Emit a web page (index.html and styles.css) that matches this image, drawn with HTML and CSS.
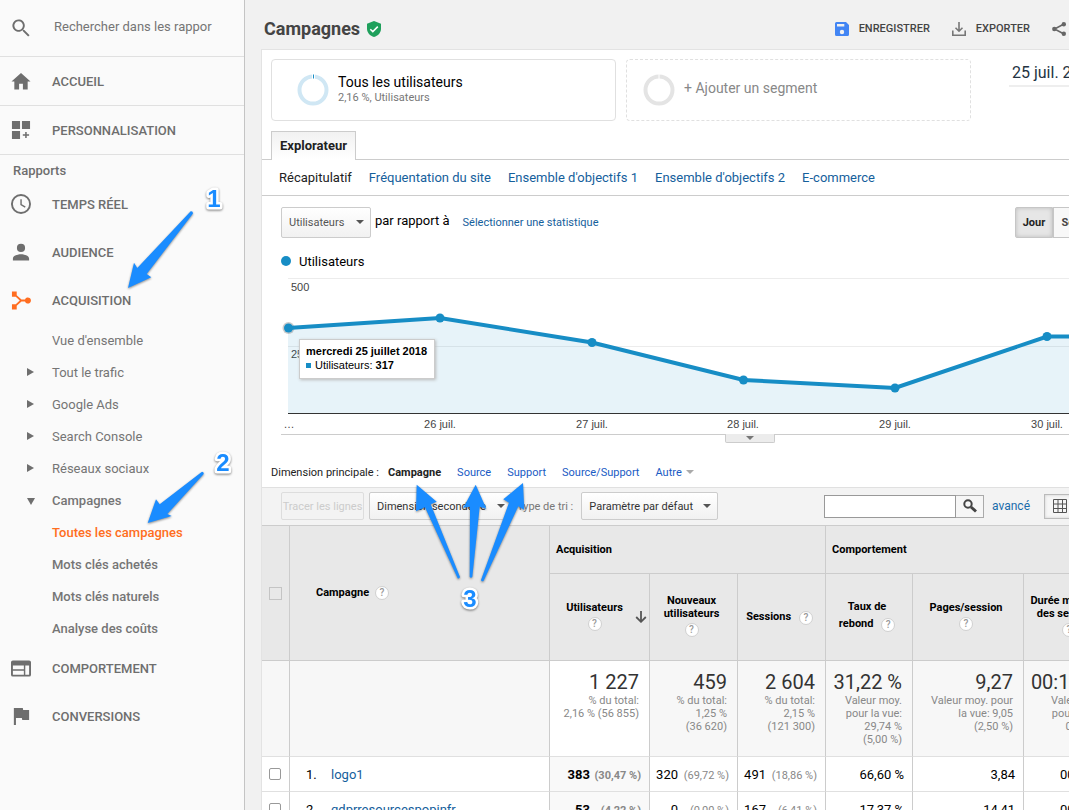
FILE: index.html
```html
<!DOCTYPE html>
<html lang="fr">
<head>
<meta charset="utf-8">
<title>Campagnes</title>
<link rel="stylesheet" href="styles.css">
</head>
<body>
<div class="app">
  <aside class="sidebar">
    <label class="side-search">
      <svg class="icon" viewBox="1.500 1.500 21 21"><path d="M15.500 14h-.8l-.3-.3A6.500 6.500 0 1 0 13.700 14.400l.3.3v.8l5.500 5.500 1.500-1.500zm-6 0a4.500 4.500 0 1 1 0-9 4.500 4.500 0 0 1 0 9z"/></svg>
      <input type="text" placeholder="Rechercher dans les rappor" aria-label="Rechercher dans les rapports">
    </label>
    <nav>
      <a class="side-item ruled" href="#"><svg class="icon" viewBox="1.500 1.500 21 21"><path d="M10 21v-6h4v6h5v-8.500H22L12 3.500 2 12.500h3V21z"/></svg>ACCUEIL</a>
      <a class="side-item ruled" href="#"><svg class="icon" viewBox="1.500 1.500 21 21"><path d="M2.500 2.500h8.500V11H2.500zM13 2.500h8.500V11H13zM2.500 13H11v8.500H2.500zM16.400 14h1.600v2.500h2.500V18H18v2.500h-1.600V18h-2.500v-1.500h2.500z"/></svg>PERSONNALISATION</a>
      <h2 class="side-title">Rapports</h2>
      <a class="side-item" href="#"><svg class="icon" viewBox="1.500 1.500 21 21"><path d="M12 1.500a10.500 10.500 0 1 0 0 21 10.500 10.500 0 0 0 0-21zm0 2a8.500 8.500 0 1 1 0 17 8.500 8.500 0 0 1 0-17zM11.300 7v6l4.800 3 .8-1.300-4.100-2.500V7z"/></svg>TEMPS RÉEL</a>
      <a class="side-item" href="#"><svg class="icon" viewBox="1.500 1.500 21 21"><path d="M12 12a4.300 4.300 0 1 0 0-8.600A4.300 4.300 0 0 0 12 12zM3.500 21v-2.300c0-3 5.700-4.400 8.500-4.400s8.500 1.400 8.500 4.400V21z"/></svg>AUDIENCE</a>
      <a class="side-item" href="#"><svg class="icon accent" viewBox="1.500 1.500 21 21"><path d="M2.500 3h5v4L12.500 11.500h3.700a3.200 3.200 0 1 1 0 2h-3.700l-5 4.500v4h-5v-5.500h4l4.200-4-4.200-4h-4z"/></svg>ACQUISITION</a>
      <a class="sub-item" href="#"><span class="caret"></span>Vue d'ensemble</a>
      <a class="sub-item" href="#"><span class="caret right"></span>Tout le trafic</a>
      <a class="sub-item" href="#"><span class="caret right"></span>Google Ads</a>
      <a class="sub-item" href="#"><span class="caret right"></span>Search Console</a>
      <a class="sub-item" href="#"><span class="caret right"></span>Réseaux sociaux</a>
      <a class="sub-item strong" href="#"><span class="caret down"></span>Campagnes</a>
      <a class="sub-item strong current" href="#"><span class="caret"></span>Toutes les campagnes</a>
      <a class="sub-item strong" href="#"><span class="caret"></span>Mots clés achetés</a>
      <a class="sub-item strong" href="#"><span class="caret"></span>Mots clés naturels</a>
      <a class="sub-item strong" href="#"><span class="caret"></span>Analyse des coûts</a>
      <a class="side-item" href="#"><svg class="icon" viewBox="1.500 1.500 21 21"><path fill-rule="evenodd" d="M3.500 4h17a2 2 0 0 1 2 2v13a2 2 0 0 1-2 2h-17a2 2 0 0 1-2-2V6a2 2 0 0 1 2-2zM3.500 9.500v3.800h11.500V9.500zM3.500 14.800V19h11.500v-4.200zM16.500 9.500V19h4V9.500z"/></svg>COMPORTEMENT</a>
      <a class="side-item" href="#"><svg class="icon" viewBox="1.500 1.500 21 21"><path d="M14.300 5.700l-.4-2.200H4.500v18h2.200v-7.500h6.200l.4 2.200h7.200V5.700z"/></svg>CONVERSIONS</a>
    </nav>
  </aside>

  <main class="main">
    <header class="page-head">
      <h1>Campagnes</h1>
      <svg class="shield" viewBox="0 0 14 16"><path fill="#1fa05c" d="M7 0l7 2.700v5C14 11.500 11 15 7 16 3 15 0 11.500 0 7.700v-5z"/><path fill="none" stroke="#fff" stroke-width="1.500" d="M3.300 8.200l2.500 2.400 5-5"/></svg>
      <div class="actions">
        <button type="button" class="action save"><svg viewBox="0 0 14 14"><path fill="#4285f4" fill-rule="evenodd" d="M1.500 0H11l3 3v9.500a1.500 1.500 0 0 1-1.500 1.500h-11A1.500 1.500 0 0 1 0 12.500v-11A1.500 1.500 0 0 1 1.500 0zM2 2v2.600h7.300V2zM7 7.800a2.200 2.200 0 1 0 0 4.400 2.200 2.200 0 0 0 0-4.400z"/></svg>ENREGISTRER</button>
        <button type="button" class="action"><svg viewBox="0 0 14 14"><path fill="none" stroke="#777" stroke-width="1.600" d="M7 0v9M3.500 5.700L7 9.200l3.500-3.500M.8 8.500v4.700h12.400V8.500"/></svg>EXPORTER</button>
        <button type="button" class="action share" aria-label="Partager"><svg viewBox="0 0 14 14"><path fill="none" stroke="#666" stroke-width="1.500" d="M12 2L2.500 7 12 12"/><g fill="#666"><circle cx="11.800" cy="2.200" r="2.200"/><circle cx="2.300" cy="7" r="2.200"/><circle cx="11.800" cy="11.800" r="2.200"/></g></svg></button>
      </div>
    </header>

    <section class="panel">
      <div class="segments">
        <div class="segment">
          <svg class="ring" viewBox="0 0 32 32"><circle cx="16" cy="16" r="13.500" fill="none" stroke="#d0e7f4" stroke-width="4"/><path stroke="#fff" stroke-width="3" d="M16.500 0v5"/><path stroke="#178dc5" stroke-width="1" d="M16.500 .5v4"/></svg>
          <div><div class="segment-name">Tous les utilisateurs</div><div class="segment-info">2,16 %, Utilisateurs</div></div>
        </div>
        <div class="segment empty">
          <svg class="ring" viewBox="0 0 32 32"><circle cx="16" cy="16" r="13.500" fill="none" stroke="#e4e4e4" stroke-width="4"/><path stroke="#fff" stroke-width="1" d="M16 0v5"/></svg>
          <button type="button" class="add-segment">+ Ajouter un segment</button>
        </div>
        <button type="button" class="date">25 juil. 2018</button>
      </div>

      <div class="tabs"><a class="tab" href="#">Explorateur</a></div>
      <nav class="subnav">
        <a class="on" href="#">Récapitulatif</a><a href="#">Fréquentation du site</a><a href="#">Ensemble d'objectifs 1</a><a href="#">Ensemble d'objectifs 2</a><a href="#">E-commerce</a>
      </nav>

      <div class="metric-bar">
        <span class="drop"><select class="metric" aria-label="Statistique"><option>Utilisateurs</option></select></span>
        <span class="versus">par rapport à</span>
        <a class="pick" href="#">Sélectionner une statistique</a>
        <div class="period"><button type="button" class="on">Jour</button><button type="button">Semaine</button></div>
      </div>

      <div class="legend"><span class="dot"></span>Utilisateurs</div>
      <div class="chart">
        <svg class="plot" role="img" aria-label="Utilisateurs par jour">
          <path stroke="#ececec" d="M7 7.500H1200M7 75.500H1200"/>
          <text x="10" y="20">500</text>
          <text x="10" y="87">250</text>
          <path fill="#178dc5" fill-opacity=".1" d="M7 57L159 47L311 71.500L462.500 109L614 117L766 65.500L918 65V142H7z"/>
          <path stroke="#333" d="M7 142.500H1200"/>
          <circle cx="7.500" cy="57" r="6" fill="#555" fill-opacity=".3"/>
          <path fill="none" stroke="#178dc5" stroke-width="4" d="M7 57L159 47L311 71.500L462.500 109L614 117L766 65.500L918 65"/>
          <g fill="#178dc5"><circle cx="7.500" cy="57" r="4.500"/><circle cx="159" cy="47" r="4.500"/><circle cx="311" cy="71.500" r="4.500"/><circle cx="462.500" cy="109" r="4.500"/><circle cx="614" cy="117" r="4.500"/><circle cx="766" cy="65.500" r="4.500"/></g>
          <g text-anchor="middle"><text x="8" y="157">…</text><text x="159" y="157">26 juil.</text><text x="311" y="157">27 juil.</text><text x="462" y="157">28 juil.</text><text x="614" y="157">29 juil.</text><text x="766" y="157">30 juil.</text></g>
        </svg>
        <div class="tip"><b>mercredi 25 juillet 2018</b><div><i></i>Utilisateurs: <b>317</b></div></div>
        <button type="button" class="handle" aria-label="Afficher les annotations"></button>
      </div>

      <div class="dimensions">
        <span>Dimension principale :</span><b class="chosen">Campagne</b><a href="#">Source</a><a href="#">Support</a><a href="#">Source/Support</a><a class="more" href="#">Autre</a>
      </div>

      <div class="toolbar">
        <button type="button" class="rows" disabled>Tracer les lignes</button>
        <span class="drop"><select class="second" aria-label="Dimension secondaire"><option>Dimension secondaire</option></select></span>
        <label class="sort">Type de tri : <span class="drop"><select class="sorting"><option>Paramètre par défaut</option></select></span></label>
        <div class="find">
          <input type="text" aria-label="Rechercher"><button type="button" aria-label="Lancer la recherche"><svg viewBox="0 0 14 14"><circle cx="5" cy="5" r="3.700" fill="none" stroke="#444" stroke-width="2"/><path stroke="#444" stroke-width="3" d="M8 8l5 4.500"/></svg></button>
          <a href="#">avancé</a>
          <button type="button" class="view" aria-label="Tableau"><svg viewBox="0 0 14 14"><path fill="none" stroke="#555" d="M.5 .5h13v13H.5zM5 .5v13M9.500 .5v13M.5 5h13M.5 9.500h13"/></svg></button>
        </div>
      </div>

      <table class="data">
        <colgroup><col class="c-check"><col class="c-name"><col class="c-users"><col class="c-new"><col class="c-sess"><col class="c-bounce"><col class="c-pages"><col class="c-time"></colgroup>
        <thead>
          <tr class="groups">
            <th rowspan="2" class="check"><input type="checkbox" disabled aria-label="Tout sélectionner"></th>
            <th rowspan="2" class="name">Campagne <span class="help">?</span></th>
            <th colspan="3" class="group">Acquisition</th>
            <th colspan="3" class="group">Comportement</th>
          </tr>
          <tr class="heads">
            <th><div class="sorted"><span>Utilisateurs<br><span class="help">?</span></span><svg viewBox="0 0 12 12"><path fill="none" stroke="#555" stroke-width="1.800" d="M6 0v10.500M1.200 6L6 10.800 10.800 6"/></svg></div></th>
            <th>Nouveaux<br>utilisateurs<br><span class="help">?</span></th>
            <th>Sessions <span class="help side">?</span></th>
            <th>Taux de<br>rebond <span class="help side">?</span></th>
            <th>Pages/session<br><span class="help">?</span></th>
            <th>Durée moyenne<br>des sessions<br><span class="help">?</span></th>
          </tr>
        </thead>
        <tbody>
          <tr class="totals">
            <td></td><td></td>
            <td class="users"><strong>1 227</strong>% du total:<br>2,16 % (56 855)</td>
            <td><strong>459</strong>% du total:<br>1,25 %<br>(36 620)</td>
            <td><strong>2 604</strong>% du total:<br>2,15 %<br>(121 300)</td>
            <td><strong>31,22 %</strong>Valeur moy.<br>pour la vue:<br>29,74 %<br>(5,00 %)</td>
            <td><strong>9,27</strong>Valeur moy. pour<br>la vue: 9,05<br>(2,50 %)</td>
            <td><strong>00:10:54</strong>Valeur moy.<br>pour la vue:<br>00:10:12<br>(7,00 %)</td>
          </tr>
          <tr class="line">
            <td class="check"><input type="checkbox" aria-label="logo1"></td>
            <td class="name"><span class="rank">1.</span><a href="#">logo1</a></td>
            <td class="users"><div class="pair">383<small>(30,47 %)</small></div></td>
            <td><div class="pair">320<small>(69,72 %)</small></div></td>
            <td><div class="pair">491<small>(18,86 %)</small></div></td>
            <td>66,60 %</td><td>3,84</td><td>00:03:12</td>
          </tr>
          <tr class="line">
            <td class="check"><input type="checkbox" aria-label="gdprresourcespopinfr"></td>
            <td class="name"><span class="rank">2.</span><a href="#">gdprresourcespopinfr</a></td>
            <td class="users"><div class="pair">53<small>(4,22 %)</small></div></td>
            <td><div class="pair">0<small>(0,00 %)</small></div></td>
            <td><div class="pair">167<small>(6,41 %)</small></div></td>
            <td>17,37 %</td><td>14,41</td><td>00:14:08</td>
          </tr>
        </tbody>
      </table>
    </section>
  </main>

  <svg class="notes" aria-hidden="true">
    <g class="arrows">
      <path d="M128 288L134 262.700 137.300 268 190.700 211.300Q193 211 193 213.500L146.700 274 151.300 277.300z"/>
      <path d="M147.700 523L156 499.300 159.700 504.300 202 471.700Q204 472 203.700 474L167.300 514 171.700 516z"/>
      <path d="M416.700 484.700L416 511.300 425 507.300 457.700 578.300Q459.500 579 460 577L430.700 504.300 436.700 501.700z"/>
      <path d="M475.700 484.700L463.300 507.700 470 506.700 469.700 577Q471 578.500 472.300 577L479.700 506.700 486.300 508.700z"/>
      <path d="M523 483L503.300 499.300 509 502.700 481 580Q481.500 582 483.500 581L518.300 506.300 524.300 510z"/>
    </g>
    <g class="digits"><text x="214" y="207">1</text><text x="223" y="471">2</text><text x="470" y="607">3</text></g>
  </svg>
</div>
</body>
</html>
```
FILE: styles.css
```css
* { box-sizing: border-box; }
body {
  margin: 0;
  height: 100vh;
  overflow: hidden;
  font-family: Roboto, "Liberation Sans", sans-serif;
  font-size: 13px;
  color: #222;
  background: #f1f1f1;
}
a { color: #15609c; text-decoration: none; }
button, select, input { font-family: inherit; font-size: inherit; color: inherit; margin: 0; }
button { background: none; border: 0; padding: 0; }
svg { display: block; }

.app { position: relative; display: flex; height: 100%; overflow: hidden; }

/* Sidebar */
.sidebar { flex: none; width: 245px; background: #fafafa; border-right: 1px solid #c4c4c4; color: #757575; }
.icon { flex: none; width: 20px; height: 20px; margin: 0 21px 0 11px; fill: #6e6e6e; }
.icon.accent { fill: #ff6d20; }
.side-search { display: flex; align-items: center; height: 57px; border-bottom: 1px solid #e0e0e0; }
.side-search input { flex: 1; min-width: 0; border: 0; background: none; padding: 0 0 3px 2px; color: #757575; outline: 0; }
.side-search input::placeholder { color: #757575; }
.side-item { display: flex; align-items: center; height: 48px; color: #6e6e6e; font-weight: 500; font-size: 13px; }
.side-item.ruled { height: 49px; border-bottom: 1px solid #e0e0e0; }
.side-title { margin: 0; padding: 8px 0 0 13px; height: 25px; font-size: 13px; line-height: 16px; font-weight: 500; color: #6e6e6e; }
.sub-item { display: flex; align-items: center; height: 32px; color: #757575; }
.sub-item.strong { font-weight: 500; }
.sub-item.current { color: #ff6d20; }
.caret { width: 52px; height: 8px; flex: none; }
.caret::before { content: ""; display: block; margin-left: 27px; }
.caret.right::before { border-left: 7px solid #6e6e6e; border-top: 4px solid transparent; border-bottom: 4px solid transparent; width: 0; }
.caret.down::before { border-top: 7px solid #6e6e6e; border-left: 4px solid transparent; border-right: 4px solid transparent; width: 0; margin-top: 2px; }
.caret.down { display: flow-root; }

/* Header */
.main { flex: 1; min-width: 0; padding-left: 16px; overflow: hidden; }
.page-head { display: flex; align-items: center; height: 49px; padding: 9px 0 0 3px; }
h1 { margin: 0 7px 0 0; font-size: 18px; line-height: 24px; font-weight: 700; color: #444; }
.shield { width: 14px; height: 16px; }
.actions { display: flex; margin-left: auto; gap: 22px; margin-right: 3px; }
.action { display: flex; align-items: center; gap: 10px; font-size: 11px; line-height: 16px; font-weight: 500; color: #444; }
.action svg { width: 14px; height: 14px; }

/* Report panel */
.panel { background: #fff; border: solid #e3e3e3; border-width: 1px 0 0 1px; overflow: hidden; min-height: 761px; }
.segments { display: flex; gap: 10px; padding: 9px 0 10px 9px; }
.segment { flex: none; display: flex; align-items: center; gap: 9px; width: 345px; height: 62px; border: 1px solid #e0e0e0; border-radius: 4px; padding-left: 25px; }
.segment.empty { border-style: dashed; padding-left: 16px; }
.ring { width: 32px; height: 32px; }
.segment-name { font-size: 14px; line-height: 16px; color: #000; }
.segment-info { font-size: 11px; line-height: 16px; color: #777; }
.add-segment { font-size: 14px; color: #888; padding-bottom: 5px; }
.date { flex: none; align-self: flex-start; margin-left: 28px; padding: 0 3px; height: 28px; border-bottom: 2px solid #eee; font-size: 16px; color: #243342; }
.tabs { display: flex; height: 29px; padding-left: 9px; border-bottom: 1px solid #ccc; }
.tab { height: 29px; padding: 0 8px; border: 1px solid #ccc; border-bottom: 0; background: linear-gradient(#f1f1f1, #fff); font-weight: 700; line-height: 28px; color: #222; }
.subnav { display: flex; gap: 17px; height: 36px; padding-left: 17px; border-bottom: 1px solid #ccc; line-height: 35px; white-space: nowrap; }
.subnav .on { color: #222; }

.drop { position: relative; flex: none; display: inline-flex; }
.drop::after { content: ""; position: absolute; right: 7px; top: 50%; margin-top: -2px; border: 4px solid transparent; border-top-color: #555; border-bottom: 0; pointer-events: none; }
select { appearance: none; border: 1px solid #ccc; border-radius: 2px; background: linear-gradient(#fff, #f1f1f1); color: #444; padding: 0 20px 0 7px; outline: 0; }
.metric-bar { display: flex; align-items: center; height: 52px; padding-left: 19px; white-space: nowrap; }
.metric { width: 90px; height: 31px; font-size: 11px; color: #555; }
.versus { margin-left: 4px; padding-bottom: 3px; color: #000; }
.pick { margin-left: 13px; font-size: 11px; }
.period { display: flex; flex: none; margin: 0 -44px 0 auto; }
.period button { height: 31px; width: 60px; border: 1px solid #c6c6c6; background: #f8f8f8; font-size: 11px; font-weight: 700; color: #444; }
.period .on { width: 38px; background: #e6e6e6; box-shadow: inset 0 0 4px #bbb; color: #222; border-radius: 2px 0 0 2px; }

/* Chart */
.legend { display: flex; align-items: center; gap: 8px; height: 26px; padding-left: 19px; color: #000; }
.dot { width: 10px; height: 10px; border-radius: 50%; background: #178dc5; }
.chart { position: relative; height: 164px; margin: -3px 0 0 19px; border-bottom: 1px solid #ccc; }
.plot { width: 100%; height: 163px; font-family: "Liberation Sans", sans-serif; font-size: 11px; fill: #444; overflow: visible; }
.tip { position: absolute; left: 18px; top: 68px; padding: 4px 7px 6px 6px; border: 1px solid #ccc; background: #fff; box-shadow: 1px 1px 3px #bbb; font: 11px/14px "Liberation Sans", sans-serif; color: #000; white-space: nowrap; }
.tip i { display: inline-block; width: 5px; height: 5px; margin: 0 4px 1px 0; background: #178dc5; }
.handle { position: absolute; left: 444px; top: 163px; width: 50px; height: 9px; border: 1px solid #ccc; border-top: 0; border-radius: 0 0 2px 2px; background: #ececec; }
.handle::after { content: ""; display: block; width: 0; margin: 0 auto; border: 4px solid transparent; border-top-color: #777; border-bottom: 0; }

/* Table tools */
.dimensions { display: flex; gap: 16px; height: 52px; padding: 23px 0 0 9px; font-size: 11px; line-height: 30px; color: #222; white-space: nowrap; }
.dimensions a { color: #1a5bc4; }
.dimensions .chosen { margin-left: -7px; }
.more::after { content: ""; display: inline-block; margin: 0 0 2px 4px; border: 4px solid transparent; border-top-color: #aaa; border-bottom: 0; }
.toolbar { display: flex; align-items: center; height: 38px; padding: 0 0 1px 19px; border-top: 1px solid #e0e0e0; background: #f3f3f3; font-size: 11px; white-space: nowrap; }
.toolbar .rows { flex: none; width: 83px; height: 28px; margin-right: 5px; border: 1px solid #ddd; border-radius: 2px; color: #ccc; font-size: 11px; }
.toolbar select { height: 28px; font-size: 11px; color: #333; }
.second { width: 143px; }
.sorting { width: 137px; }
.sort { display: flex; align-items: center; gap: 8px; margin-left: 5px; color: #777; }
.find { display: flex; align-items: center; margin: 0 -7px 0 auto; }
.find input { width: 132px; height: 23px; border: 1px solid #999; outline: 0; background: #fff; }
.find button { display: flex; align-items: center; justify-content: center; width: 28px; height: 23px; border: 1px solid #aaa; border-left: 0; background: #f6f6f6; }
.find svg { width: 14px; height: 14px; }
.find a { margin: 0 14px 0 8px; font-size: 12px; color: #1a6cab; }
.find .view { width: 32px; height: 25px; border: 1px solid #bbb; box-shadow: inset 0 0 3px #ccc; }

/* Data table */
.data { table-layout: fixed; width: 857px; border-collapse: separate; border-spacing: 0; border-top: 1px solid #ccc; }
.c-check { width: 28px; }
.c-name { width: 260px; }
.c-users { width: 100px; }
.c-new, .c-sess { width: 88px; }
.c-bounce { width: 87px; }
.c-pages { width: 111px; }
.c-time { width: 95px; }
.data th, .data td { border-right: 1px solid #ccc; border-bottom: 1px solid #ccc; padding: 0; }
.data th { background: #e8e8e8; font-size: 11px; line-height: 13px; font-weight: 700; color: #000; }
.groups { height: 48px; }
.heads { height: 87px; }
.heads th { padding-right: 4px; }
.data .group { text-align: left; padding-left: 6px; }
.data th.name { text-align: left; padding-left: 26px; }
.help { display: inline-block; width: 14px; height: 14px; margin: 3px 0; border: 1px solid #d0d0d0; border-radius: 50%; background: #fff; color: #999; font-size: 10px; line-height: 12px; font-weight: 500; text-align: center; vertical-align: middle; }
.name .help { margin-left: 3px; }
.help.side { margin: 5px 0 3px 5px; }
.sorted { display: flex; align-items: center; padding-left: 4px; }
.sorted > span { flex: 1; }
.sorted svg { width: 12px; height: 12px; margin-right: -2px; }
.data input { appearance: none; display: block; width: 12px; height: 12px; margin: 0 0 0 7px; border: 1px solid #999; border-radius: 2px; background: #fff; }
.data th input { border-color: #c4c4c4; border-radius: 0; background: none; width: 13px; height: 13px; }
.totals td { height: 96px; padding: 10px 10px 0 0; background: #f7f7f7; border-bottom-color: #e0e0e0; text-align: right; vertical-align: top; font-size: 11px; line-height: 13px; color: #888; white-space: nowrap; }
.totals strong { display: block; font-size: 20px; line-height: 23px; font-weight: 400; color: #333; }
.totals .users { background: #fff; }
.line td { height: 35px; padding-right: 8px; border-bottom-color: #e0e0e0; text-align: right; color: #000; white-space: nowrap; }
.line td.check { padding: 0; }
.line td.name { text-align: left; padding-left: 16px; }
.rank { display: inline-block; width: 25px; }
.line .users { background: #f9f9f9; font-weight: 700; }
.pair { display: flex; justify-content: flex-end; align-items: baseline; }
.pair small { width: 51px; font-size: 11px; color: #888; }

/* Annotations over the page */
.notes { position: absolute; inset: 0; width: 100%; height: 100%; pointer-events: none; }
.arrows { fill: #1a8cff; filter: drop-shadow(0 1px 1px rgba(0, 0, 0, .45)); }
.digits { fill: #1a8cff; stroke: #fff; stroke-width: 5px; stroke-linejoin: round; paint-order: stroke; font: bold 24px "Liberation Sans", sans-serif; text-anchor: middle; filter: drop-shadow(0 1px 1px rgba(0, 0, 0, .5)); }
```
